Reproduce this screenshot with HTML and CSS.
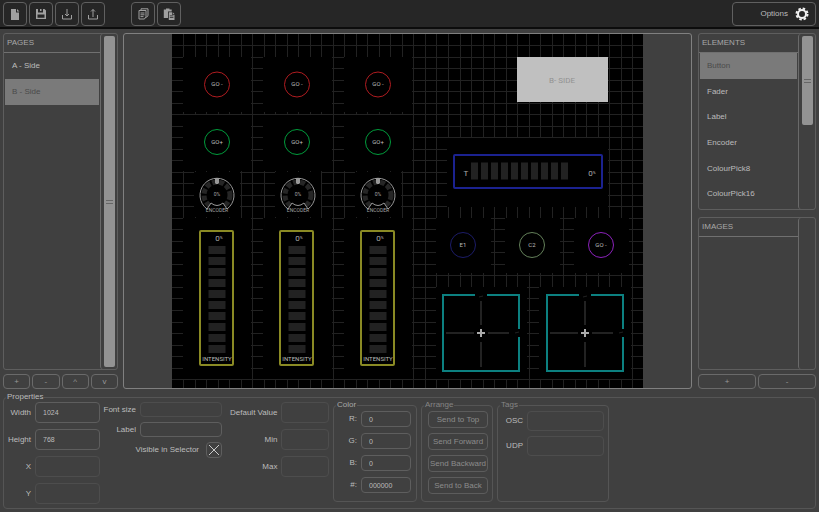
FILE: index.html
```html
<!DOCTYPE html>
<html lang="en">
<head>
<meta charset="utf-8">
<title>Layout Editor</title>
<link rel="stylesheet" href="styles.css">
</head>
<body>
<header class="topbar">
  <button class="tool" aria-label="New"><svg viewBox="0 0 12 12"><path d="M2 1h5v3.500h3V12H2z M8 1l2.500 2.500H8z"/></svg></button>
  <button class="tool" aria-label="Save"><svg viewBox="0 0 12 12"><path fill-rule="evenodd" d="M1 1h8.500L11 2.500V11H1z M2.500 6.500v3.300h7V6.500z M3 1v3.500h5V1H6.500v2H5V1z"/></svg></button>
  <button class="tool" aria-label="Import"><svg class="line" viewBox="0 0 12 12"><path d="M1.500 7v4h9V7M6 1v7M4 6l2 2 2-2"/></svg></button>
  <button class="tool" aria-label="Export"><svg class="line" viewBox="0 0 12 12"><path d="M1.500 7v4h9V7M6 9V1.500M4 3.500l2-2 2 2"/></svg></button>
  <span class="tool-gap"></span>
  <button class="tool" aria-label="Copy"><svg class="line" viewBox="0 0 12 12"><path d="M4 2V.8h7v7L9 9.500M2 2.500h7v6L7.500 11H2zM3.500 5h4M3.500 6.800h4M3.500 8.600h3"/></svg></button>
  <button class="tool" aria-label="Paste"><svg viewBox="0 0 12 12"><path fill-rule="evenodd" d="M.8 1.500H3V.5h3.500v1h2.200v2H5V10H.800z M5.800 4.300H9v2.500h2.500V12H5.800z M9.700 4.300l1.800 1.800H9.700z M6.800 7.500v.7h3.600v-.7z M6.800 9.300v.7h3.600v-.7z"/></svg></button>
  <button class="options">Options
    <svg viewBox="0 0 14 14"><circle cx="7" cy="7" r="4"/><circle class="teeth" cx="7" cy="7" r="5.500"/></svg>
  </button>
</header>

<main class="workspace">
  <section class="side">
    <div class="panel grow">
      <div class="list">
        <h2>PAGES</h2>
        <ul>
          <li><button class="item">A - Side</button></li>
          <li><button class="item selected">B - Side</button></li>
        </ul>
      </div>
      <div class="scroll"><div class="thumb full"><i></i></div></div>
    </div>
    <div class="actions">
      <button>+</button><button>-</button><button>^</button><button>v</button>
    </div>
  </section>

  <section class="editor">
    <svg viewBox="0 0 471 354">
      <defs>
        <g id="encoder">
          <circle class="ticks" r="13"/>
          <path class="wedge" d="M0 2L-12 17H12z"/>
          <path class="ring" d="M-10 14A17 17 0 1 1 10 14L6 8Q0 13-6 8L-10 14"/>
          <path class="knob" d="M-2-17h4v5l-1 1h-2l-1-1z"/>
          <text y="1">0%</text>
          <text y="17">ENCODER</text>
        </g>
        <g id="fader">
          <rect class="frame" x="1" y="1" width="33" height="134" rx="1"/>
          <path class="cells" d="M18 16v107"/>
          <text class="value" x="20" y="11">0<tspan class="sup" dy="-2">%</tspan></text>
          <text class="mid" x="18" y="131">INTENSITY</text>
        </g>
        <g id="pad">
          <path class="frame" d="M33 1H1v76h76V43M77 35V1H45"/>
          <path class="axis" d="M39 7v24M39 48v25M4 39h28M46 39h21"/>
          <path class="cross" d="M39 35v8M35 39h8"/>
          <path class="hint" d="M37 3l4-1M73 39l4-1"/>
        </g>
      </defs>
      <rect width="471" height="354"/>
      <g class="grid" id="grid"></g>
      <path d="M11 23h68v55h-68zM91 23h69v55h-69zM172 23h68v55h-68zM11 81h68v56h-68zM91 81h69v56h-69zM172 81h68v56h-68zM22 138h46v45h-46zM103 138h46v45h-46zM183 138h46v45h-46zM11 184h68v161h-68zM91 184h69v161h-69zM172 184h68v161h-68zM275 104h161v69h-161zM264 184h55v55h-55zM333 184h55v55h-55zM402 184h55v55h-55zM264 253h91v92h-91zM367 253h92v92h-92z"/>
      <g class="round red"><circle cx="45" cy="50.500" r="12.500"/><circle cx="125" cy="50.500" r="12.500"/><circle cx="206" cy="50.500" r="12.500"/></g>
      <g class="round green"><circle cx="45" cy="108" r="12.500"/><circle cx="125" cy="108" r="12.500"/><circle cx="206" cy="108" r="12.500"/></g>
      <text class="mid" x="45" y="52">GO -</text><text class="mid" x="125" y="52">GO -</text><text class="mid" x="206" y="52">GO -</text>
      <text class="mid" x="45" y="110">GO+</text><text class="mid" x="125" y="110">GO+</text><text class="mid" x="206" y="110">GO+</text>
      <use href="#encoder" x="45" y="161"/><use href="#encoder" x="126" y="161"/><use href="#encoder" x="206" y="161"/>
      <use href="#fader" x="27" y="196"/><use href="#fader" x="107" y="196"/><use href="#fader" x="188" y="196"/>
      <rect class="label-box" x="345" y="23" width="91" height="45"/>
      <text class="big" x="390" y="49">B- SIDE</text>
      <rect class="frame blue" x="282" y="121" width="148" height="33" rx="1"/>
      <path class="cells wide" d="M299 137h100"/>
      <text class="value" x="294" y="142">T</text>
      <text class="value" x="420" y="142">0<tspan class="sup" dy="-2">%</tspan></text>
      <g class="round"><circle class="navy" cx="291" cy="211" r="12.500"/><circle class="sage" cx="360" cy="211" r="12.500"/><circle class="violet" cx="429" cy="211" r="12.500"/></g>
      <text class="mid" x="291" y="213">E1</text><text class="mid" x="360" y="213">C2</text><text class="mid" x="429" y="213">GO -</text>
      <use href="#pad" x="270" y="260"/><use href="#pad" x="374" y="260"/>
    </svg>
  </section>

  <section class="side">
    <div class="panel elements">
      <div class="list">
        <h2>ELEMENTS</h2>
        <ul>
          <li><button class="item selected">Button</button></li>
          <li><button class="item">Fader</button></li>
          <li><button class="item">Label</button></li>
          <li><button class="item">Encoder</button></li>
          <li><button class="item">ColourPick8</button></li>
          <li><button class="item">ColourPick16</button></li>
        </ul>
      </div>
      <div class="scroll"><div class="thumb half"><i></i></div></div>
    </div>
    <div class="panel grow">
      <div class="list"><h2>IMAGES</h2></div>
      <div class="scroll"></div>
    </div>
    <div class="actions"><button>+</button><button>-</button></div>
  </section>
</main>

<fieldset class="properties">
  <legend>Properties</legend>
  <div class="groups">
    <div class="fields size">
      <label for="w">Width</label><input id="w" value="1024">
      <label for="h">Height</label><input id="h" value="768">
      <label for="x">X</label><input id="x" disabled>
      <label for="y">Y</label><input id="y" disabled>
    </div>
    <div class="fields text">
      <label for="fs">Font size</label><input id="fs" disabled>
      <label for="lb">Label</label><input id="lb">
      <div class="check">
        <label for="vis">Visible in Selector</label>
        <span class="tick"><input type="checkbox" id="vis" checked><svg viewBox="0 0 16 16"><path d="M3 3l10 10M13 3L3 13"/></svg></span>
      </div>
    </div>
    <div class="fields range">
      <label for="dv">Default Value</label><input id="dv" disabled>
      <label for="mn">Min</label><input id="mn" disabled>
      <label for="mx">Max</label><input id="mx" disabled>
    </div>
    <fieldset class="box color">
      <legend>Color</legend>
      <div class="fields">
        <label for="r">R:</label><input id="r" value="0">
        <label for="g">G:</label><input id="g" value="0">
        <label for="b">B:</label><input id="b" value="0">
        <label for="hex">#:</label><input id="hex" value="000000">
      </div>
    </fieldset>
    <fieldset class="box arrange">
      <legend>Arrange</legend>
      <div class="stack">
        <button>Send to Top</button><button>Send Forward</button><button>Send Backward</button><button>Send to Back</button>
      </div>
    </fieldset>
    <fieldset class="box tags">
      <legend>Tags</legend>
      <div class="fields">
        <label for="osc">OSC</label><input id="osc" disabled>
        <label for="udp">UDP</label><input id="udp" disabled>
      </div>
    </fieldset>
  </div>
</fieldset>
<script src="grid.js"></script>
</body>
</html>
```
FILE: grid.js
```js
// Draws the snap grid behind the page's controls.
const step = 11.52;
let d = "";
for (let i = 1; i < 41; i++) d += `M${Math.floor(i * step) + 0.5} 0v354`;
for (let i = 1; i < 31; i++) d += `M0 ${Math.floor(i * step) + 0.5}h471`;
const path = document.createElementNS("http://www.w3.org/2000/svg", "path");
path.setAttribute("d", d);
document.getElementById("grid").append(path);
```
FILE: styles.css
```css
* { box-sizing: border-box; }

body {
  margin: 0;
  height: 100vh;
  display: flex;
  flex-direction: column;
  background: #404040;
  color: #bcbcbc;
  font: 8px/10px "Liberation Sans", Arial, sans-serif;
}

button, input { font: inherit; color: inherit; margin: 0; padding: 0; background: none; }
button { border: 1px solid #6a6a6a; border-radius: 4px; text-align: center; white-space: nowrap; }

/* Top bar */
.topbar {
  flex: none;
  display: flex;
  gap: 2px;
  height: 29px;
  padding: 2px 3px 0;
  background: #262626;
  border-bottom: 2px solid #0c0c0c;
}
.tool, .options { height: 24px; border-color: #606060; }
.tool { width: 24px; display: grid; place-items: center; }
.tool svg { width: 12px; height: 12px; fill: #a0a0a0; }
.tool .line { fill: none; stroke: #a0a0a0; }
.tool-gap { width: 22px; }
.options {
  width: 84px;
  margin-left: auto;
  padding-right: 6px;
  display: flex;
  align-items: center;
  justify-content: flex-end;
  gap: 7px;
}
.options svg { width: 14px; height: 14px; fill: none; stroke: #f0f0f0; stroke-width: 2; }
.options .teeth { stroke-width: 2; stroke-dasharray: 2.500 1.820; }

/* Workspace */
.workspace {
  flex: 1;
  min-height: 0;
  display: grid;
  grid-template-columns: 115px 1fr 118px;
  grid-template-rows: minmax(0, 1fr);
  column-gap: 5px;
  padding: 4px 3px 3px;
}
.workspace .editor { margin-right: 1px; }
.side { display: flex; flex-direction: column; }
.grow { flex: 1; }
.panel { display: flex; border: 1px solid #5e5e5e; border-radius: 3px; }
.list { flex: 1; display: flex; flex-direction: column; }
.list h2 {
  margin: 0;
  padding: 4px 3px;
  height: 19px;
  font: inherit;
  color: #a8a8a8;
  border-bottom: 1px solid #707070;
}
.list ul {
  flex: 1;
  margin: 0;
  padding: 0 1px 2px;
  list-style: none;
}
.item {
  display: block;
  width: 100%;
  height: 26px;
  padding-left: 7px;
  border: 0;
  border-radius: 0;
  text-align: left;
}
.selected { background: #7a7a7a; color: #4a4a4a; }
.elements { height: 177px; margin-bottom: 7px; }
.elements ul { display: flex; flex-direction: column; }
.elements li { flex: 1; min-height: 0; }
.elements .item { height: 100%; }
.scroll { width: 17px; padding: 2px 2px 2px 3px; border-left: 1px solid #6a6a6a; border-radius: 3px; }
.thumb { width: 11px; border-radius: 2px; background: #939393; display: grid; place-items: center; }
.full { height: 100%; }
.half { height: 89px; }
.thumb i { width: 7px; height: 4px; border: solid #666; border-width: 1px 0; }
.actions { display: flex; gap: 2px; margin-top: 4px; }
.actions button { flex: 1; height: 15px; color: #999; }

/* Page canvas */
.editor { border: 1px solid #808080; border-radius: 3px; min-height: 0; display: flex; }
.editor svg { width: 100%; height: 100%; min-height: 0; }
.editor text {
  fill: #a4a4a4;
  font: 5px Roboto, "Liberation Sans", sans-serif;
  text-anchor: middle;
}
.editor .mid { font-size: 6px; fill: #bbb; }
.editor .value { font-size: 8px; fill: #aaa; }
.editor .big { font-size: 8px; fill: #929292; }
.editor .sup { font-size: 4px; }
.grid { stroke: #222; }
.round { fill: none; stroke-width: 1; }
.red { stroke: #b01c20; }
.green { stroke: #009c3c; }
.navy { stroke: #1c1c68; }
.sage { stroke: #64805a; }
.violet { stroke: #8c22bc; }
.ticks { fill: none; stroke: #262626; stroke-width: 5; stroke-dasharray: 5 2; }
.wedge { fill: #000; }
.ring { fill: none; stroke: #989898; }
.knob { fill: #999; }
.frame { fill: none; stroke: #8a8a24; stroke-width: 2; }
.blue { stroke: #1b2290; }
.cells { fill: none; stroke: #222; stroke-width: 17; stroke-dasharray: 8 3; }
.wide { stroke-dasharray: 7 3; }
#pad .frame { stroke: #0c8080; }
.axis { stroke: #222; stroke-width: 2; }
.cross { stroke: #aaa; stroke-width: 2; }
.hint { stroke: #222; }
.label-box { fill: #c0c0c0; }

/* Properties */
fieldset { min-width: 0; margin: 0; padding: 0; border: 1px solid #555; border-radius: 4px; }
legend { padding: 0 1px; margin-left: 2px; }
.properties { flex: none; margin: 0 3px 3px; }
.groups { display: flex; align-items: flex-start; padding-bottom: 4px; }
.fields { display: grid; align-items: center; column-gap: 4px; }
.fields label { text-align: right; white-space: nowrap; }
.fields input {
  width: 100%;
  height: 100%;
  min-width: 0;
  padding: 0 7px;
  border: 1px solid #5e5e5e;
  border-radius: 4px;
  font-size: 7px;
}
.fields input:disabled { border-color: #4d4d4d; }
.size { width: 96px; grid-template-columns: 1fr 65px; grid-auto-rows: 21px; row-gap: 6px; }
.text { width: 119px; margin: 0 8px 0 3px; grid-template-columns: 1fr 82px; grid-auto-rows: 15px; row-gap: 5px; }
.range { width: 99px; margin-right: 4px; grid-template-columns: 1fr 48px; grid-auto-rows: 21px; row-gap: 6px; }
.check { grid-column: 1 / 3; display: flex; justify-content: flex-end; align-items: center; gap: 7px; }
.tick { display: grid; width: 16px; height: 16px; }
.tick input, .tick svg { grid-area: 1 / 1; }
.tick input { appearance: none; padding: 0; }
.tick svg { stroke: #c8c8c8; pointer-events: none; }
.box { height: 100px; margin-right: 4px; }
.box legend { line-height: 6px; color: #a8a8a8; }
.color { width: 84px; }
.color .fields { padding: 3px 5px 0; grid-template-columns: 1fr 50px; grid-auto-rows: 16px; row-gap: 6px; }
.arrange { width: 72px; }
.box.arrange legend, .box.tags legend { color: #858585; }
.stack { display: grid; gap: 5px; padding: 3px 4px 0 6px; }
.stack button { height: 17px; color: #8c8c8c; border: 1px solid #5c5c5c; }
.tags { width: 112px; }
.tags .fields { padding: 3px 4px 0; grid-template-columns: 1fr 77px; grid-auto-rows: 20px; row-gap: 5px; }
```
